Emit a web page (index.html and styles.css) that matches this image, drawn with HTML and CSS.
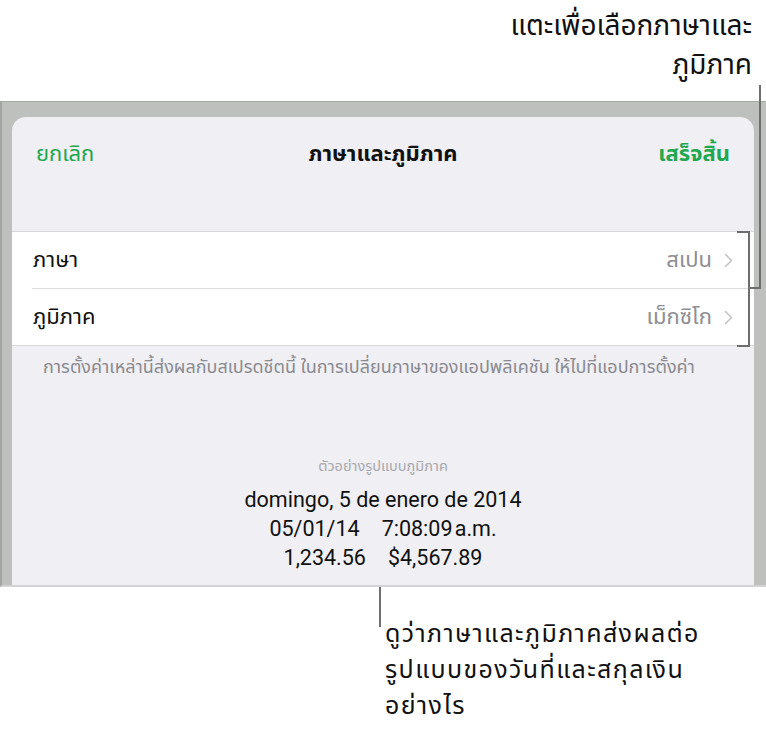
FILE: index.html
```html
<!DOCTYPE html>
<html lang="th">
<head>
<meta charset="utf-8">
<link rel="stylesheet" href="styles.css">
</head>
<body>
<div class="page">
  <div class="top-callout">
    <div>แตะเพื่อเลือกภาษาและ</div>
    <div>ภูมิภาค</div>
  </div>
  <div class="frame">
    <div class="sheet">
      <div class="nav">
        <span class="nav-btn">ยกเลิก</span>
        <span class="nav-title">ภาษาและภูมิภาค</span>
        <span class="nav-btn nav-done">เสร็จสิ้น</span>
      </div>
      <div class="group">
        <div class="cell">
          <span class="cell-label">ภาษา</span>
          <span class="cell-value">สเปน</span>
          <svg class="chev" width="9" height="15" viewBox="0 0 9 15"><path d="M1.5 1.5 L7.5 7.5 L1.5 13.5" fill="none" stroke="#c4c4c9" stroke-width="1.6" stroke-linecap="round" stroke-linejoin="round"/></svg>
        </div>
        <div class="cell">
          <span class="cell-label">ภูมิภาค</span>
          <span class="cell-value">เม็กซิโก</span>
          <svg class="chev" width="9" height="15" viewBox="0 0 9 15"><path d="M1.5 1.5 L7.5 7.5 L1.5 13.5" fill="none" stroke="#c4c4c9" stroke-width="1.6" stroke-linecap="round" stroke-linejoin="round"/></svg>
        </div>
      </div>
      <div class="footer">การตั้งค่าเหล่านี้ส่งผลกับสเปรดชีตนี้ ในการเปลี่ยนภาษาของแอปพลิเคชัน ให้ไปที่แอปการตั้งค่า</div>
      <div class="sample">
        <div class="sample-label">ตัวอย่างรูปแบบภูมิภาค</div>
        <div class="sample-line">domingo, 5 de enero de 2014</div>
        <div class="sample-line"><span>05/01/14</span><span>7:08:09&#8202;a.m.</span></div>
        <div class="sample-line"><span>1,234.56</span><span>$4,567.89</span></div>
      </div>
    </div>
  </div>
  <div class="bottom-callout">
    <div class="bottom-line"></div>
    <div class="bottom-text">
      <div>ดูว่าภาษาและภูมิภาคส่งผลต่อ</div>
      <div>รูปแบบของวันที่และสกุลเงิน</div>
      <div>อย่างไร</div>
    </div>
  </div>
  <div class="bracket"></div>
  <div class="bracket-link"></div>
  <div class="top-line"></div>
</div>
</body>
</html>
```
FILE: styles.css
```css
html, body {
  margin: 0;
  padding: 0;
  background: #ffffff;
}
.page {
  position: relative;
  width: 766px;
  height: 732px;
  overflow: hidden;
  font-family: "Noto Sans Thai", "Noto Sans", "DejaVu Sans", sans-serif;
  color: #111;
}
.top-callout {
  box-sizing: border-box;
  height: 101px;
  padding: 7px 14px 0 0;
  text-align: right;
  font-size: 28px;
  line-height: 39px;
  color: #111;
}
.frame {
  box-sizing: border-box;
  height: 486px;
  background: #bec0bd;
  border-top: 1px solid #a7a9a6;
  border-left: 2px solid #a3a5a2;
  border-bottom: 2px solid #d3d3d5;
  padding: 15px 12px 0 10px;
}
.sheet {
  height: 100%;
  background: #efeff4;
  border-radius: 14px 14px 0 0;
  display: flex;
  flex-direction: column;
}
.nav {
  height: 74px;
  display: flex;
  align-items: center;
  justify-content: space-between;
  padding: 0 24px;
  font-size: 22px;
}
.nav-btn {
  color: #1fa84f;
  width: 120px;
}
.nav-done {
  text-align: right;
  font-weight: 700;
}
.nav-title {
  font-weight: 700;
  font-size: 22px;
  color: #111;
}
.group {
  margin-top: 40px;
  background: #fff;
  border-top: 1px solid #d8d8dc;
  border-bottom: 1px solid #d8d8dc;
}
.cell {
  height: 56px;
  margin-left: 20px;
  padding-right: 21px;
  display: flex;
  align-items: center;
  font-size: 22px;
}
.cell + .cell {
  border-top: 1px solid #dcdce0;
}
.cell-label {
  flex: 1;
  margin-left: 1px;
}
.cell-value {
  color: #8e8e93;
  margin-right: 12px;
}
.chev {
  display: block;
}
.footer {
  padding: 12px 0 0 31px;
  font-size: 18px;
  color: #8a8a8f;
  line-height: 20px;
  white-space: nowrap;
}
.sample {
  margin-top: 79px;
  text-align: center;
  font-family: Roboto, "Noto Sans Thai", sans-serif;
}
.sample-label {
  font-family: "Noto Sans Thai", "Noto Sans", sans-serif;
  font-size: 14.5px;
  color: #a8a8ad;
  line-height: 20px;
  margin-bottom: 8px;
}
.sample-line {
  font-size: 21.5px;
  line-height: 29px;
  color: #111;
  display: flex;
  justify-content: center;
  gap: 22px;
}
.bottom-callout {
  padding-left: 379px;
}
.bottom-line {
  width: 2px;
  height: 40px;
  background: #6e6e6e;
}
.bottom-text {
  margin-top: -11px;
  padding-left: 6px;
  font-size: 25px;
  line-height: 36px;
  letter-spacing: 1.4px;
  color: #111;
}
.bracket {
  position: absolute;
  left: 737px;
  top: 231px;
  width: 11px;
  height: 112px;
  border: 2px solid #6e6e6e;
  border-left: none;
}
.bracket-link {
  position: absolute;
  left: 750px;
  top: 287px;
  width: 11px;
  height: 2px;
  background: #6e6e6e;
}
.top-line {
  position: absolute;
  left: 759px;
  top: 85px;
  width: 2px;
  height: 204px;
  background: #6e6e6e;
}
```
